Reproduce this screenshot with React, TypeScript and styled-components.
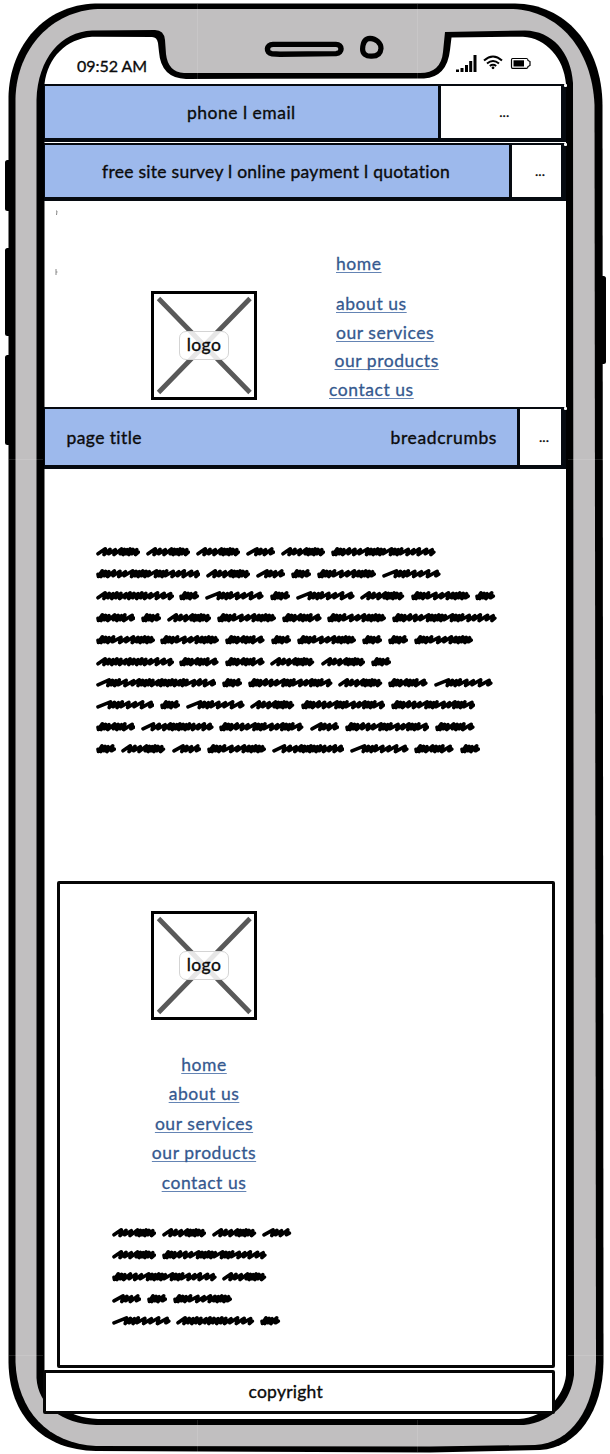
import React from "react";
import styled, { createGlobalStyle } from "styled-components";

const GlobalStyle = createGlobalStyle`
  * { box-sizing: border-box; }
  body { margin: 0; background: #fff; }
`;

const Phone = styled.main`
  position: relative;
  width: 610px;
  height: 1454px;
  overflow: hidden;
  font-family: Lato, "Open Sans", sans-serif;
  font-size: 17.5px;
  color: #0b0b0b;
`;

const Casing = styled.svg`
  position: absolute;
  inset: 0;
`;

const Screen = styled.div`
  position: relative;
  display: flex;
  flex-direction: column;
  width: 522px;
  height: 1454px;
  margin-left: 44px;
`;

const StatusBar = styled.header`
  display: flex;
  justify-content: space-between;
  height: 84px;
  padding: 54px 35px 0 33px;
`;

const Text = styled.span<{ $spacing?: number; $size?: number }>`
  display: inline-block;
  white-space: nowrap;
  font-size: ${(p) => p.$size ?? 17.5}px;
  line-height: 24px;
  letter-spacing: ${(p) => p.$spacing ?? 0.5}px;
  -webkit-text-stroke: 0.35px currentColor;
`;

const StatusIcons = styled.svg`
  display: block;
`;

const Bar = styled.section<{ $height: number; $gap?: number }>`
  position: relative;
  display: flex;
  flex: none;
  height: ${(p) => p.$height}px;
  margin-bottom: ${(p) => p.$gap ?? 0}px;
  border: solid #060a10;
  border-width: 2.5px 5px 4px 1px;
  background: #fff;

  /* nick in the top right corner of the sketched frame */
  &::after {
    content: "";
    position: absolute;
    top: -2px;
    right: -6px;
    width: 3px;
    height: 3px;
    border-radius: 1px;
    background: #fff;
  }
`;

const BarMain = styled.div<{ $width: number; $pad: number }>`
  display: flex;
  flex: none;
  justify-content: space-between;
  align-items: center;
  width: ${(p) => p.$width}px;
  padding: 1px 20px 0 ${(p) => p.$pad}px;
  border-right: 3px solid #060a10;
  background: #9db9ec;
`;

const BarMore = styled.div<{ $shift?: number }>`
  display: flex;
  flex: 1;
  align-items: center;
  justify-content: center;
  padding-left: ${(p) => p.$shift ?? 0}px;
  font-size: 14px;
  line-height: 20px;
  -webkit-text-stroke: 0.3px currentColor;
`;

const Header = styled.section`
  position: relative;
  display: flex;
  flex: none;
  height: 206px;
  padding: 90px 0 0 107px;
`;

const Specks = styled.svg`
  position: absolute;
  left: 11px;
  top: 8px;
`;

const Nav = styled.nav`
  display: flex;
  flex-direction: column;
  margin: -39px 0 0 72px;
`;

const FooterNav = styled.nav`
  display: flex;
  flex-direction: column;
  align-items: center;
  width: 292px;
  margin-top: 33px;
`;

const Link = styled.a<{ $spacing?: number; $gap?: number; $indent?: number }>`
  display: block;
  height: 25px;
  width: max-content;
  margin: 0 0 ${(p) => p.$gap ?? 4.2}px ${(p) => p.$indent ?? 0}px;
  color: #35598f;
  line-height: 24px;
  letter-spacing: ${(p) => p.$spacing ?? 0.55}px;
  white-space: nowrap;
  text-decoration: underline;
  text-decoration-color: #6484b4;
  text-decoration-thickness: 1.4px;
  text-underline-offset: 1.5px;
  text-decoration-skip-ink: none;
  -webkit-text-stroke: 0.3px currentColor;
`;

const LogoBox = styled.div`
  display: grid;
  place-items: center;
  flex: none;
  width: 106px;
  height: 109px;
  border: 3.4px solid #000;
  background: #fff;
  > * { grid-area: 1 / 1; }
`;

const LogoLabel = styled.div`
  z-index: 1;
  width: 50px;
  height: 29px;
  border: 1.4px solid #d4d4d4;
  border-radius: 7px;
  background: rgba(255, 255, 255, 0.85);
  text-align: center;
  line-height: 25px;
`;

const Article = styled.section`
  flex: none;
  height: 412px;
  padding: 72.5px 0 0 51.5px;
`;

const ScribbleRow = styled.div`
  display: flex;
  gap: 5.7px;
  height: 21.85px;
  align-items: center;
`;

const Footer = styled.footer`
  flex: none;
  width: 498px;
  height: 487px;
  margin-left: 12.5px;
  padding: 27px 0 0 91.5px;
  border: 3px solid #060606;
  border-radius: 2px;
  background: #fff;
`;

const FooterLinks = styled.div`
  margin-left: -93px;
`;

const FooterText = styled.div`
  margin: 22.5px 0 0 -39px;
`;

const Copyright = styled.div`
  display: flex;
  flex: none;
  justify-content: center;
  align-items: center;
  width: 511.5px;
  height: 44px;
  margin: 2px 0 0 -1px;
  padding: 0 26px 0 0;
  border: 3px solid #060606;
  border-radius: 2px;
  background: #fff;
`;

/* Each entry is a scribbled word: its width and the places of its pen strokes. */
const WORDS: Record<string, { width: number; steps: number[] }> = {
  A: { width: 44.4, steps: [5.5, 5, 5.5, 6.5, 3, 3, 3, 3, 4] },
  B: { width: 104.8, steps: [2, 3, 3, 5, 5, 5, 6.5, 3, 3, 3, 3, 3, 6.5, 3, 3, 3, 6, 5, 5, 6.5, 5] },
  C: { width: 29.4, steps: [7.5, 4, 5, 6.5] },
  D: { width: 20.3, steps: [2, 3, 3, 4.5] },
  E: { width: 59.2, steps: [2, 3, 3, 4, 6.5, 5.5, 5.5, 4, 3, 3, 3, 3] },
  F: { width: 78.3, steps: [4, 3, 3, 3, 3, 4, 3, 3, 3, 3, 3, 4, 5, 5, 5] },
  G: { width: 58.8, steps: [8, 3, 3, 3, 5, 5, 5.5, 6.5] },
  H: { width: 39.8, steps: [2, 3, 3, 5, 3, 3, 3, 6.5] },
  I: { width: 84.6, steps: [2, 3, 3, 5, 5, 5, 6.5, 3, 3, 3, 6.5, 5, 5, 3, 3, 3, 6.5] },
  J: { width: 120.8, steps: [8, 3, 3, 3, 6, 6.5, 5, 3, 3, 3, 3, 5, 3, 3, 3, 3, 3, 4, 3, 3, 6.5, 5, 5, 6.5] },
  K: { width: 72.8, steps: [8, 5.5, 5.5, 5, 3, 3, 3, 3, 3, 3, 4, 5, 5, 5.5] },
};

function Scribble({ kind }: { kind: string }) {
  const { width, steps } = WORDS[kind];
  const total = steps.reduce((a, b) => a + b, 0);
  const scale = (width - 7.6) / total;
  let x = 2;
  const dense = steps[0] < 3;
  let d = `M${x} ${dense ? 7.2 : 8.8}${dense ? " L2.4 9.4" : ""}`;
  steps.forEach((s, i) => {
    const step = s * scale;
    const top = 3.8 + (i % 3) * 0.45;
    const low = 9.6 - (i % 2) * 0.8;
    d += ` L${(x + step + 2).toFixed(1)} ${top.toFixed(1)} L${(x + step + 0.7).toFixed(1)} ${low.toFixed(1)}`;
    x += step;
  });
  d += ` L${(width - 2).toFixed(1)} 7.2`;
  return (
    <svg width={width} height="14" viewBox={`0 0 ${width} 14`} style={{ flex: "none" }}>
      <path d={d} fill="none" stroke="#000" strokeWidth="3.6" strokeLinecap="round" strokeLinejoin="round" />
    </svg>
  );
}

const BODY = ["AAACAB", "BACDEG", "FDGDGAED", "HDAEHEB", "EEHDEDDE", "FHHAAD", "JDIAHG", "GDGAII", "HKICIH", "DACEKGHD"];
const FOOT = ["AAAC", "AB", "BA", "CDE", "GFD"];

function Lines({ rows }: { rows: string[] }) {
  return (
    <>
      {rows.map((row, r) => (
        <ScribbleRow key={r}>
          {row.split("").map((k, i) => (
            <Scribble key={i} kind={k} />
          ))}
        </ScribbleRow>
      ))}
    </>
  );
}

function Logo() {
  return (
    <LogoBox>
      <svg width="99" height="102" viewBox="0 0 99 102">
        <path d="M3.500 3.500 L95 97.500 M95 3.500 L3.500 97.500" stroke="#595959" strokeWidth="4.8" />
      </svg>
      <LogoLabel>
        <Text $spacing={0.4}>logo</Text>
      </LogoLabel>
    </LogoBox>
  );
}

function PhoneCasing() {
  return (
    <Casing width="610" height="1454" viewBox="0 0 610 1454">
      <g fill="#000">
        <rect x="5" y="160" width="10" height="51" rx="2.5" />
        <rect x="5" y="248" width="10" height="88" rx="2.5" />
        <rect x="5" y="355" width="10" height="90" rx="2.5" />
        <rect x="596" y="276" width="10" height="88" rx="2.5" />
      </g>
      <path
        d="M95 3.5 L515 3.5 C565 4 602 45 602.5 105 L603.5 1362 C603 1410 578 1448 540 1450 L430 1452.5 L96 1451 C42 1450 9 1415 8.500 1362 L8.500 96 C10 45 45 5 95 3.5Z"
        fill="#000"
      />
      <path
        d="M98 9 L513 9 C558 11 592 48 594.500 105 L596 1362 C594 1408 572 1443 535 1445 L430 1446.500 L96 1446 C48 1444 17 1410 15.500 1362 L15.500 98 C17 48 52 11 98 9Z"
        fill="#c1bfc0"
      />
      <path
        d="M92 30.500 L155 30 Q164 30 165 40 L166 54 Q168 72 184 73 L420 73 Q441 73 443 52 L445 32 L525 30.500 C552 31 571 52 573 83 L574 1375 C571 1401 553 1422 524 1425 L96 1425 C62 1424 38 1405 36.500 1378 L36.500 100 C38 58 61 32 92 30.500Z"
        fill="#000"
      />
      <path
        d="M92 36.700 L152 37 Q157 37 158 43 L159 52 Q161 78 186 79 L424 78.500 Q447 77 450 50 L451.500 37.500 L523 36.700 C546 38 564 58 566 84 L566 1375 C564 1396 546 1417 519 1419 L98 1419 C67 1418 46 1400 44.500 1375 L44.500 84 C48 57 66 39 92 36.700Z"
        fill="#fff"
      />
      <path
        d="M197.500 4V79M417.500 4V79M197.500 1420V1452M417.500 1420V1452M9 459.500H43M568 459.500H603M9 1355.500H43M568 1355.500H603"
        stroke="#fff"
        strokeOpacity="0.12"
      />
      <path
        d="M273 44.400L336 44.400C342.500 44.500 343 53 336 53.600L280 54.200L272 53.800C265.500 53 266 44.500 273 44.400Z"
        fill="#c1bfc0"
        stroke="#000"
        strokeWidth="5.400"
      />
      <path
        d="M370 38.300C376 38.500 381 43 381 48.500C380.500 54 377 56.300 371.500 56.200C366 56.500 362.500 53.500 362.600 49C362.800 43 365 38.500 370 38.300Z"
        fill="#c1bfc0"
        stroke="#000"
        strokeWidth="5.200"
      />
    </Casing>
  );
}

export default function App() {
  return (
    <Phone>
      <GlobalStyle />
      <PhoneCasing />
      <Screen>
        <StatusBar>
          <Text $size={16} $spacing={-0.05}>09:52 AM</Text>
          <StatusIcons width="76" height="20" viewBox="0 0 76 20">
            <path d="M1 15.500h3v2.500h-3zM5.500 14h3v4h-3zM10 11h3v7h-3zM14.200 7h3v11h-3zM18.500 1h3v17h-3z" fill="#000" />
            <path d="M29 6.500 Q38 -1.500 47 6.500 M32 9.500 Q38 4.500 44 9.500 M34.800 12 Q38 9.500 41.200 12" fill="none" stroke="#000" strokeWidth="2" />
            <circle cx="38" cy="13.800" r="1.400" />
            <path d="M57.500 4.500H71.500Q73 4.500 73 6.500L75 7.500V11.500L73 12.500Q73 14.300 71.500 14.300H57.500Q56.500 14.300 56.500 13V6Q56.500 4.500 57.500 4.500Z" fill="#fff" stroke="#000" strokeWidth="1.200" />
            <path d="M58.500 6.300h10.500v6.200h-10.500z" fill="#000" />
          </StatusIcons>
        </StatusBar>

        <Bar $height={58} $gap={1}>
          <BarMain $width={395.5} $pad={142}>
            <Text>phone l email</Text>
          </BarMain>
          <BarMore $shift={7}>...</BarMore>
        </Bar>
        <Bar $height={58}>
          <BarMain $width={467} $pad={57}>
            <Text $spacing={0.27}>free site survey l online payment l quotation</Text>
          </BarMain>
          <BarMore $shift={7}>...</BarMore>
        </Bar>

        <Header>
          <Specks width="4" height="68" viewBox="0 0 4 68">
            <path d="M1 2l1 0l-.5 4M1 60v6M1 63l1.500 0" fill="none" stroke="#888" strokeWidth="1" />
          </Specks>
          <Logo />
          <Nav>
            <Link $gap={15} $indent={7}>home</Link>
            <Link $indent={7}>about us</Link>
            <Link $indent={7}>our services</Link>
            <Link $indent={5.5}>our products</Link>
            <Link>contact us</Link>
          </Nav>
        </Header>

        <Bar $height={62}>
          <BarMain $width={475} $pad={21.5}>
            <Text $spacing={0.4}>page title</Text>
            <Text $spacing={0.6}>breadcrumbs</Text>
          </BarMain>
          <BarMore $shift={7}>...</BarMore>
        </Bar>

        <Article>
          <Lines rows={BODY} />
        </Article>

        <Footer>
          <Logo />
          <FooterLinks>
            <FooterNav>
              <Link>home</Link>
              <Link $gap={5}>about us</Link>
              <Link>our services</Link>
              <Link>our products</Link>
              <Link>contact us</Link>
            </FooterNav>
          </FooterLinks>
          <FooterText>
            <Lines rows={FOOT} />
          </FooterText>
        </Footer>
        <Copyright>
          <Text $spacing={0.25}>copyright</Text>
        </Copyright>
      </Screen>
    </Phone>
  );
}
